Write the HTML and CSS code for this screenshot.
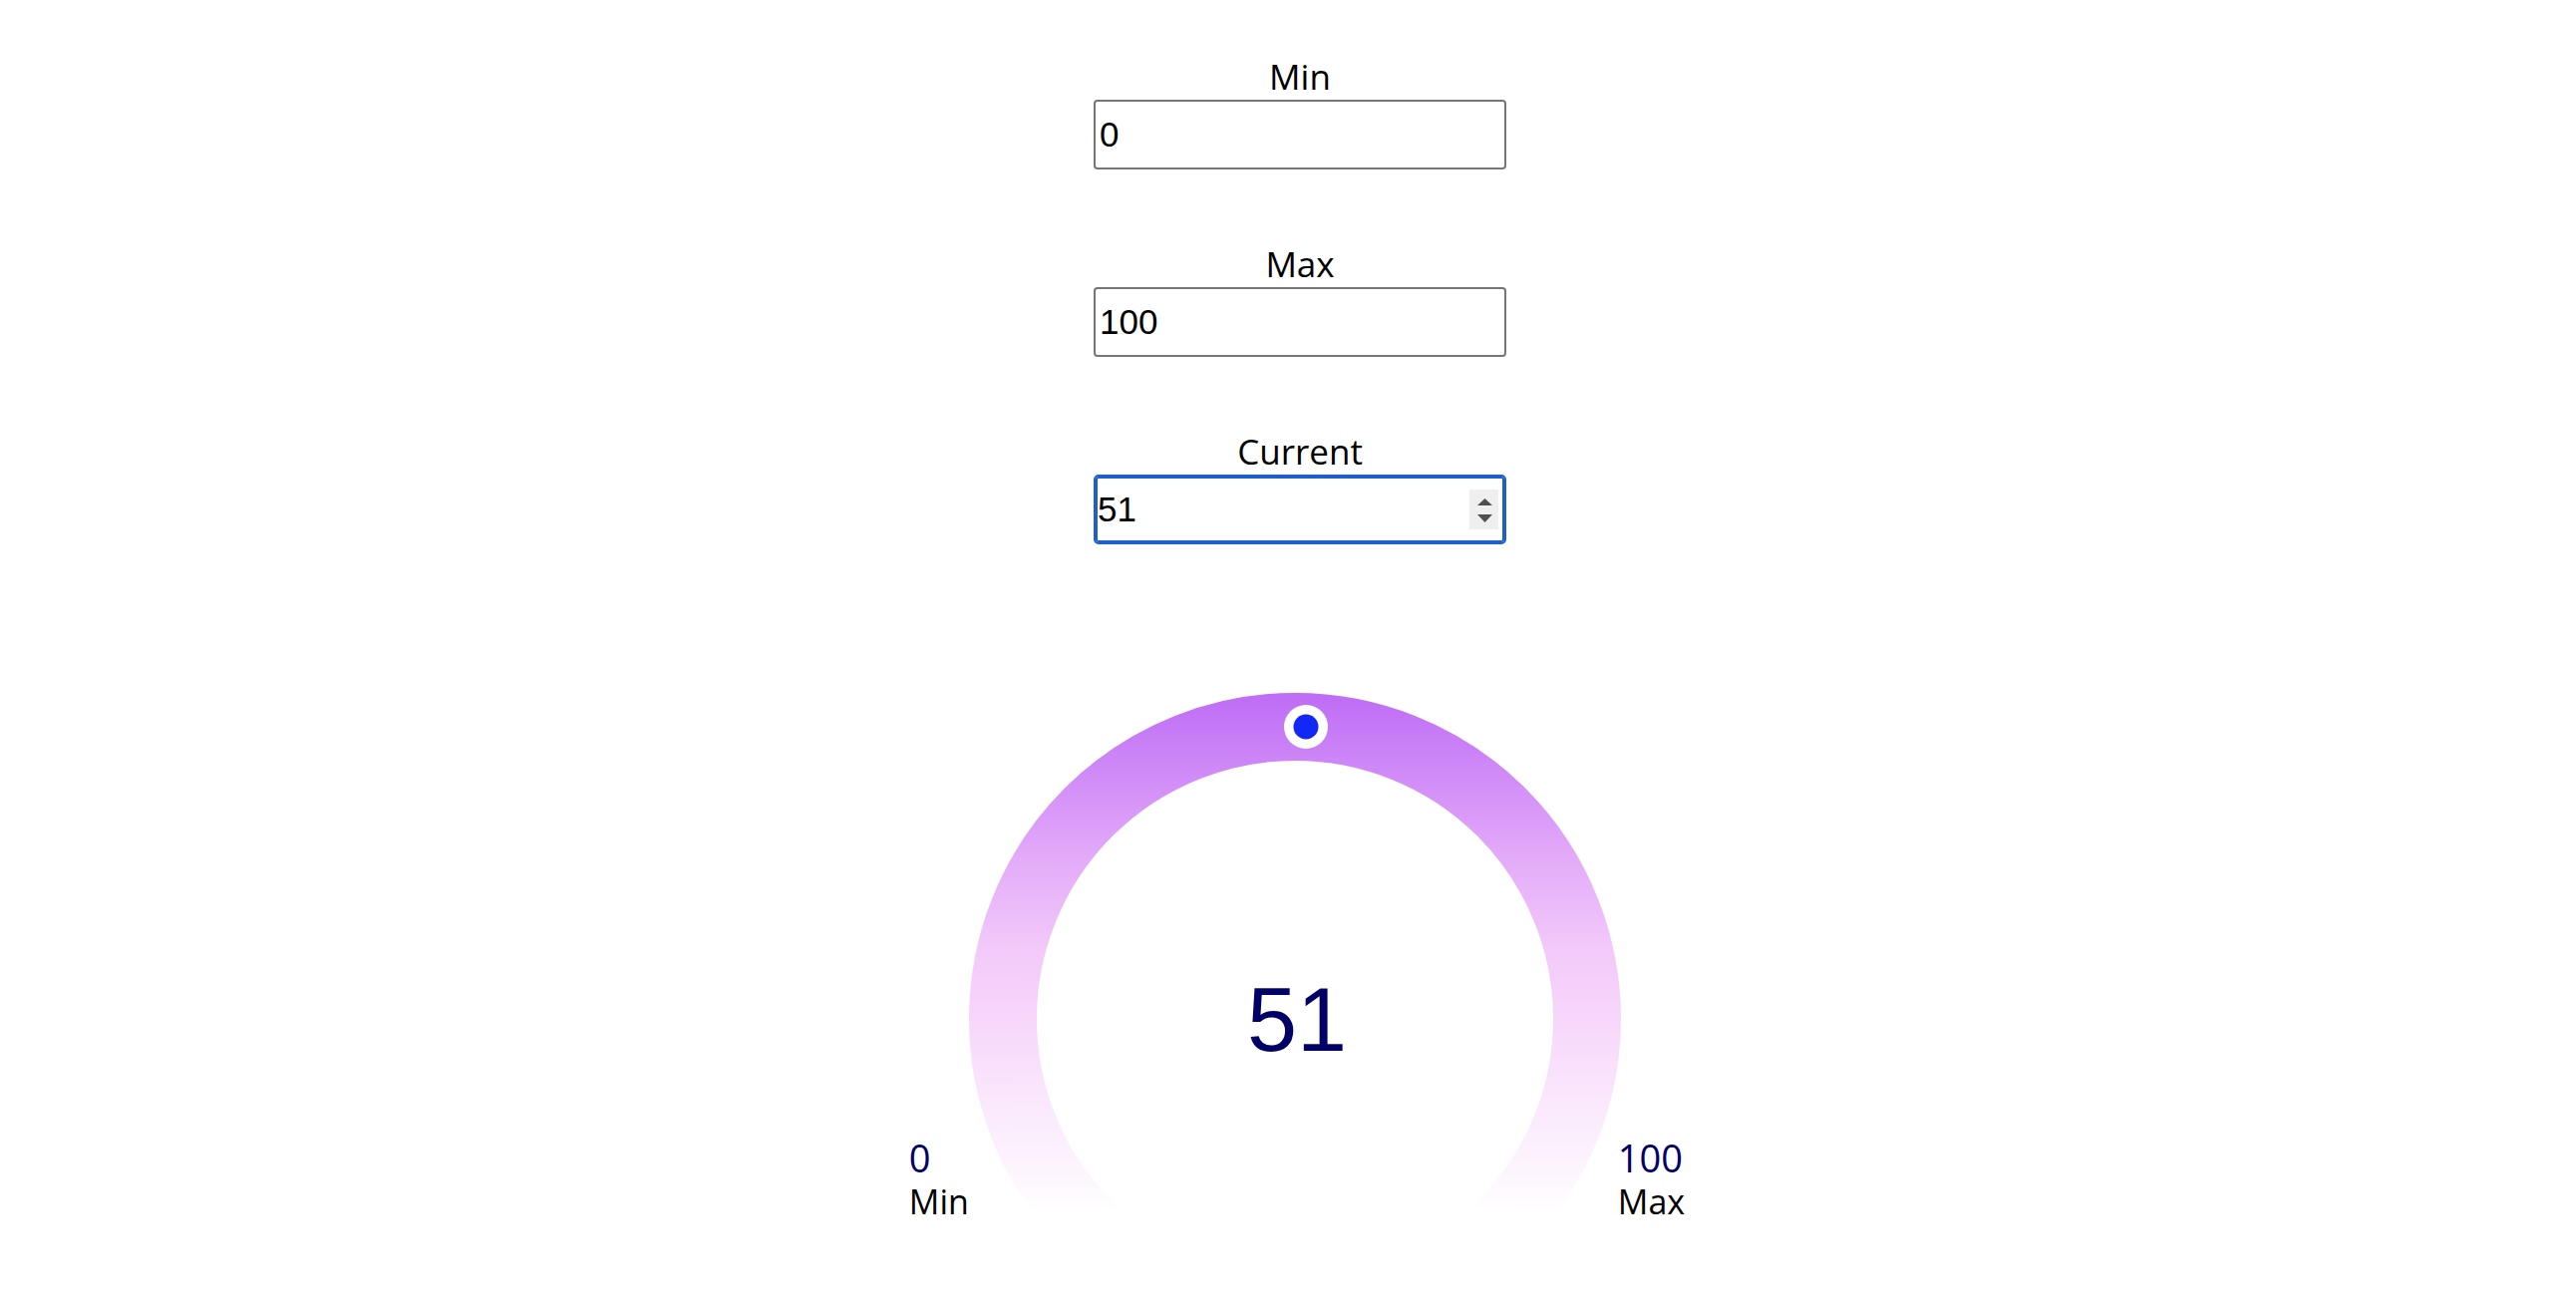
FILE: index.html
```html
<!DOCTYPE html>
<html>
	<head>
		<meta charset="utf-8" />
		<title>Gauge</title>
		<link rel="stylesheet" href="styles.css">
	</head>
	<body>
		<div class="mainbox">
			<div class="field">
				<label class="field-label" for="min">Min</label>
				<div class="field-box">
					<input id="min" class="field-input" type="text" value="0">
				</div>
			</div>
			<div class="field">
				<label class="field-label" for="max">Max</label>
				<div class="field-box">
					<input id="max" class="field-input" type="text" value="100">
				</div>
			</div>
			<div class="field">
				<label class="field-label" for="current">Current</label>
				<div class="field-box field-focus">
					<input id="current" class="field-input" type="text" value="51">
					<svg class="spin" width="29" height="40" viewBox="0 0 29 40">
						<rect x="0" y="0" width="29" height="40" fill="#efefef"/>
						<polygon points="15.5,9 8,16 23,16" fill="#505050"/>
						<polygon points="8,25 23,25 15.5,33" fill="#505050"/>
					</svg>
				</div>
			</div>

			<div class="gauge">
				<div class="gauge-end">
					<div class="gauge-num">0</div>
					<div class="gauge-text">Min</div>
				</div>
				<svg class="gauge-ring" width="654" height="520" viewBox="0 0 654 520">
					<defs>
						<linearGradient id="ringfade" gradientUnits="userSpaceOnUse" x1="0" y1="0" x2="0" y2="520">
							<stop offset="0" stop-color="#be6cf5"/>
							<stop offset="0.32" stop-color="#e3abf9"/>
							<stop offset="0.5" stop-color="#f3caf9"/>
							<stop offset="0.63" stop-color="#f7d6fb"/>
							<stop offset="0.78" stop-color="#fae7fc"/>
							<stop offset="0.93" stop-color="#fdf6fe"/>
							<stop offset="1" stop-color="#ffffff"/>
						</linearGradient>
					</defs>
					<circle cx="327" cy="327" r="293" fill="none" stroke="url(#ringfade)" stroke-width="68"/>
					<circle cx="338" cy="34" r="22" fill="#ffffff"/>
					<circle cx="338" cy="34" r="12.5" fill="#1229f5"/>
					<text class="gauge-value" x="329" y="359" text-anchor="middle">51</text>
				</svg>
				<div class="gauge-end gauge-end-right">
					<div class="gauge-num">100</div>
					<div class="gauge-text">Max</div>
				</div>
			</div>
		</div>
	</body>
</html>
```

FILE: styles.css
```css
*{
	margin: 0;
	padding: 0;
	box-sizing: border-box;
}
body{
	background: #fff;
	color: #000;
	font-family: "Open Sans", "Noto Sans", sans-serif;
	padding-left: 24px;
}
.mainbox{
	display: flex;
	flex-direction: column;
	align-items: center;
	padding-top: 56px;
	gap: 74px;
}
.field{
	display: flex;
	flex-direction: column;
	align-items: center;
}
.field-label{
	display: block;
	font-size: 35px;
	line-height: 42px;
	margin-bottom: 2px;
}
.field-box{
	display: flex;
	align-items: center;
	width: 414px;
	height: 70px;
	border: 2px solid #767676;
	border-radius: 4px;
	background: #fff;
}
.field-focus{
	border-color: #1f5fc9;
	border-radius: 5px;
	box-shadow: inset 0 0 0 2px #1f5fc9;
}
.field-input{
	flex: 1;
	min-width: 0;
	height: 100%;
	border: 0;
	outline: none;
	background: transparent;
	padding: 0 2px 0 4px;
	font-family: "Liberation Sans", Arial, sans-serif;
	font-size: 35px;
	color: #000;
}
.field-focus .field-input{
	padding-left: 2px;
}
.spin{
	display: block;
	margin-right: 6px;
}
.gauge{
	display: flex;
	align-items: flex-end;
	margin-top: 75px;
	margin-left: -6px;
}
.gauge-ring{
	display: block;
	margin-bottom: 11px;
}
.gauge-end-right{
	margin-left: -3px;
}
.gauge-value{
	font-family: "Liberation Sans", Arial, sans-serif;
	font-size: 90px;
	fill: #000066;
}
.gauge-num{
	font-size: 38px;
	line-height: 45px;
	color: #000066;
}
.gauge-text{
	font-size: 34px;
	line-height: 42px;
}
```
